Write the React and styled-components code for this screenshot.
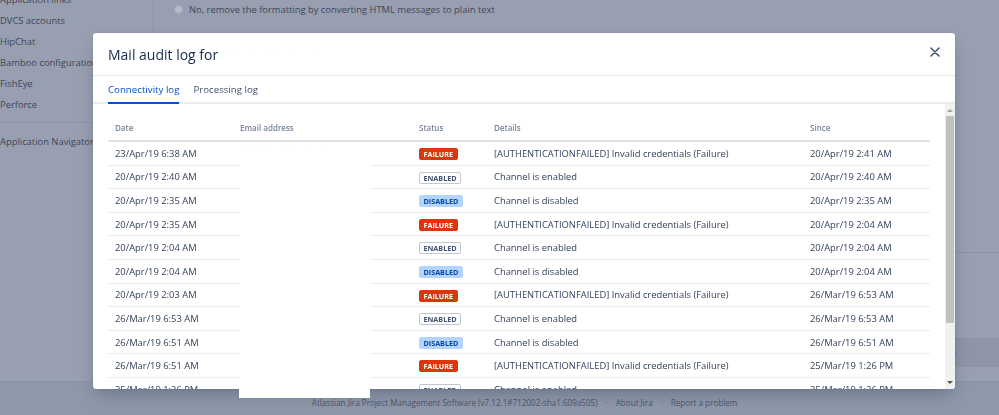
import React from 'react'
import styled, { createGlobalStyle } from 'styled-components'

const GlobalStyle = createGlobalStyle`
  html, body { margin: 0; padding: 0; }
  body {
    width: 999px;
    height: 415px;
    overflow: hidden;
    background: #979fb0;
    font-family: 'Open Sans', 'Noto Sans', sans-serif;
    color: #172b4d;
  }
  * { box-sizing: border-box; }
`

const sidebarItems = ['Application links', 'DVCS accounts', 'HipChat', 'Bamboo configuration', 'FishEye', 'Perforce']

const rows = [
  ['23/Apr/19 6:38 AM', 'failure', '[AUTHENTICATIONFAILED] Invalid credentials (Failure)', '20/Apr/19 2:41 AM'],
  ['20/Apr/19 2:40 AM', 'enabled', 'Channel is enabled', '20/Apr/19 2:40 AM'],
  ['20/Apr/19 2:35 AM', 'disabled', 'Channel is disabled', '20/Apr/19 2:35 AM'],
  ['20/Apr/19 2:35 AM', 'failure', '[AUTHENTICATIONFAILED] Invalid credentials (Failure)', '20/Apr/19 2:04 AM'],
  ['20/Apr/19 2:04 AM', 'enabled', 'Channel is enabled', '20/Apr/19 2:04 AM'],
  ['20/Apr/19 2:04 AM', 'disabled', 'Channel is disabled', '20/Apr/19 2:04 AM'],
  ['20/Apr/19 2:03 AM', 'failure', '[AUTHENTICATIONFAILED] Invalid credentials (Failure)', '26/Mar/19 6:53 AM'],
  ['26/Mar/19 6:53 AM', 'enabled', 'Channel is enabled', '26/Mar/19 6:53 AM'],
  ['26/Mar/19 6:51 AM', 'disabled', 'Channel is disabled', '26/Mar/19 6:51 AM'],
  ['26/Mar/19 6:51 AM', 'failure', '[AUTHENTICATIONFAILED] Invalid credentials (Failure)', '25/Mar/19 1:26 PM'],
  ['25/Mar/19 1:26 PM', 'enabled', 'Channel is enabled', '25/Mar/19 1:26 PM'],
]

const lozenge = {
  failure: { bg: '#de350b', fg: '#ffffff', border: '#de350b' },
  enabled: { bg: '#ffffff', fg: '#42526e', border: '#c1c7d0' },
  disabled: { bg: '#b3d4ff', fg: '#0747a6', border: '#b3d4ff' },
}

/* dimmed admin page behind the dialog */
const Page = styled.div`
  display: flex;
  flex-direction: column;
  height: 415px;
`

const Main = styled.div`
  display: flex;
  height: 382px;
  border-bottom: 1px solid #8a93a4;
`

const Sidebar = styled.nav`
  width: 154px;
  border-right: 1px solid #8c94a5;
  display: flex;
  flex-direction: column;
  margin-top: -11px;
`

const NavItem = styled.div`
  height: 21px;
  line-height: 21px;
  font-size: 9.4px;
  color: #3f475a;
  white-space: nowrap;
`

const NavDivider = styled.div`
  height: 1px;
  background: #8c94a5;
  margin: 7px 0 8px;
`

const Content = styled.div`
  flex: 1;
  display: flex;
  flex-direction: column;
`

const OptionRow = styled.label`
  display: flex;
  align-items: center;
  gap: 6px;
  height: 18px;
  padding-left: 20px;
  font-size: 9.4px;
  color: #3f475a;
`

const Radio = styled.span`
  width: 9px;
  height: 9px;
  border-radius: 50%;
  background: #b4bac6;
  border: 1px solid #a1a8b6;
`

const Panel = styled.div`
  margin-top: 234px;
  border-top: 1px solid #8b93a4;
  flex: 1;
  display: flex;
  flex-direction: column;
`

const ButtonBar = styled.div`
  margin-top: 85px;
  height: 29px;
  background: #8d95a6;
  border-top: 1px solid #8a92a3;
  display: flex;
  justify-content: flex-end;
  align-items: center;
  padding-right: 42px;
`

const Hint = styled.span`
  width: 1px;
  height: 4px;
  background: #6f86b8;
`

const Footer = styled.footer`
  flex: 1;
  background: #8f98a9;
  display: flex;
  justify-content: center;
  align-items: center;
  gap: 8px;
  padding: 8px 0 0 50px;
  font-size: 8.1px;
  color: #4c566a;
`

/* dialog */
const Modal = styled.section`
  position: fixed;
  left: 93px;
  top: 33px;
  width: 862px;
  height: 356px;
  background: #fff;
  border-radius: 3px;
  box-shadow: 0 0 1px rgba(9, 30, 66, 0.31), 0 8px 16px -4px rgba(9, 30, 66, 0.3);
  display: flex;
  flex-direction: column;
  overflow: hidden;
`

const Header = styled.header`
  height: 43px;
  border-bottom: 1px solid #e4e6ea;
  display: flex;
  align-items: center;
  justify-content: space-between;
  padding: 0 14px 0 15px;
`

const Title = styled.h2`
  margin: 0;
  font-size: 14px;
  font-weight: 400;
  color: #172b4d;
  display: flex;
  align-items: center;
`

const Redacted = styled.span`
  margin-left: 8px;
  font-size: 6px;
  letter-spacing: 7px;
  color: #c7cbd3;
`

const Close = styled.button`
  border: 0;
  background: none;
  padding: 0;
  margin-top: -4px;
  width: 12px;
  height: 12px;
  display: flex;
  align-items: center;
  justify-content: center;
  color: #42526e;
`

const Tabs = styled.div`
  height: 28px;
  border-bottom: 2px solid #ebecf0;
  display: flex;
  gap: 14px;
  padding-left: 15px;
`

const Tab = styled.div`
  font-size: 9.7px;
  color: ${({ $active }) => ($active ? '#0052cc' : '#42526e')};
  display: flex;
  align-items: center;
  margin-bottom: -2px;
  border-bottom: 2px solid ${({ $active }) => ($active ? '#0052cc' : 'transparent')};
  padding-top: 1px;
`

const Body = styled.div`
  flex: 1;
  display: flex;
  min-height: 0;
`

const TableWrap = styled.div`
  flex: 1;
  overflow: hidden;
  padding: 14px 15px 0 15px;
`

const Row = styled.div`
  display: grid;
  grid-template-columns: 125px 179px 75px 316px 1fr;
  align-items: center;
  height: ${({ $head }) => ($head ? '24px' : '23.6px')};
  padding-bottom: ${({ $head }) => ($head ? '3px' : '0')};
  border-bottom: ${({ $head }) => ($head ? '2px solid #dfe1e6' : '1px solid #ebecf0')};
`

const Th = styled.div`
  padding-left: 7px;
  font-size: 8px;
  font-weight: 600;
  color: #7a8599;
`

const Td = styled.div`
  padding-left: 7px;
  font-size: 9.4px;
  color: #34425a;
  white-space: nowrap;
`

const Dots = styled.span`
  font-size: 6px;
  letter-spacing: 6px;
  color: #c2c7cf;
  position: relative;
  top: -4px;
`

const Lozenge = styled.span`
  display: inline-block;
  height: 12px;
  line-height: 10px;
  padding: 0 3.5px;
  border-radius: 2px;
  border: 1px solid ${({ $kind }) => lozenge[$kind].border};
  background: ${({ $kind }) => lozenge[$kind].bg};
  color: ${({ $kind }) => lozenge[$kind].fg};
  font-size: 7.2px;
  font-weight: 700;
  text-transform: uppercase;
  vertical-align: middle;
`

const Scrollbar = styled.div`
  width: 10px;
  background: #f1f1f1;
  display: flex;
  flex-direction: column;
  align-items: center;
`

const ArrowBtn = styled.div`
  height: ${({ $down }) => ($down ? '13px' : '12px')};
  width: 100%;
  display: flex;
  align-items: center;
  justify-content: center;
  margin-top: ${({ $down }) => ($down ? 'auto' : '0')};
  &::before {
    content: '';
    border-left: 3px solid transparent;
    border-right: 3px solid transparent;
    ${({ $down }) =>
      $down ? 'border-top: 3px solid #505050;' : 'border-bottom: 3px solid #a3a3a3;'}
  }
`

const Thumb = styled.div`
  width: 8px;
  height: 207px;
  background: #c1c1c1;
`

/* white paint-over that hides the e-mail addresses in the screenshot */
const Redaction = styled.div`
  position: fixed;
  left: 239px;
  top: 153px;
  width: 131px;
  height: 245px;
  background: #fff;
`

const CloseIcon = () => (
  <svg width="10" height="10" viewBox="0 0 10 10">
    <path d="M1 1 L9 9 M9 1 L1 9" stroke="currentColor" strokeWidth="1.5" strokeLinecap="round" />
  </svg>
)

const App = () => {
  return (
    <>
      <GlobalStyle />
      <Page>
        <Main>
          <Sidebar>
            {sidebarItems.map((item) => (
              <NavItem key={item}>{item}</NavItem>
            ))}
            <NavDivider />
            <NavItem>Application Navigator</NavItem>
          </Sidebar>
          <Content>
            <OptionRow>
              <Radio />
              No, remove the formatting by converting HTML messages to plain text
            </OptionRow>
            <Panel>
              <ButtonBar>
                <Hint />
              </ButtonBar>
            </Panel>
          </Content>
        </Main>
        <Footer>
          <span>Atlassian Jira Project Management Software (v7.12.1#712002-sha1:609a505)</span>
          <span>·</span>
          <span>About Jira</span>
          <span>·</span>
          <span>Report a problem</span>
        </Footer>
      </Page>

      <Modal>
        <Header>
          <Title>
            Mail audit log for<Redacted>·· · ·· · ·</Redacted>
          </Title>
          <Close aria-label="Close">
            <CloseIcon />
          </Close>
        </Header>
        <Tabs>
          <Tab $active>Connectivity log</Tab>
          <Tab>Processing log</Tab>
        </Tabs>
        <Body>
          <TableWrap>
            <Row $head>
              <Th>Date</Th>
              <Th>Email address</Th>
              <Th>Status</Th>
              <Th>Details</Th>
              <Th>Since</Th>
            </Row>
            {rows.map(([date, status, details, since], i) => (
              <Row key={i}>
                <Td>{date}</Td>
                <Td>{i === 0 ? <Dots>· · · ·· · ·</Dots> : null}</Td>
                <Td>
                  <Lozenge $kind={status}>{status}</Lozenge>
                </Td>
                <Td>{details}</Td>
                <Td>{since}</Td>
              </Row>
            ))}
          </TableWrap>
          <Scrollbar>
            <ArrowBtn />
            <Thumb />
            <ArrowBtn $down />
          </Scrollbar>
        </Body>
      </Modal>
      <Redaction />
    </>
  )
}

export default App
